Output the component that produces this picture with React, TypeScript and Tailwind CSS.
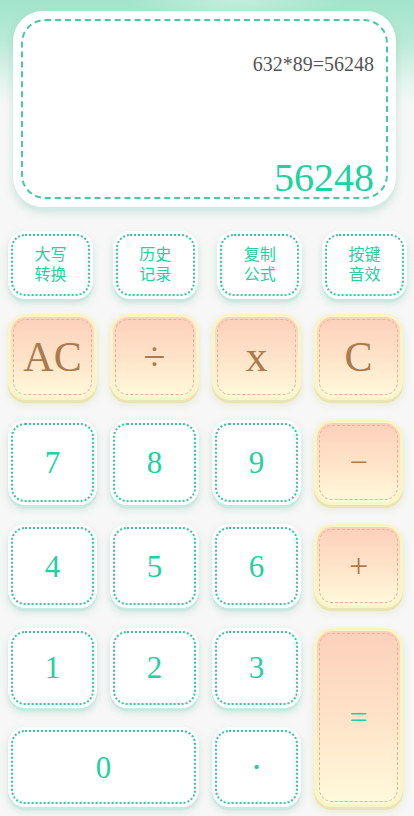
import type { ReactNode } from 'react';

const serif = 'font-["Liberation_Serif","Times_New_Roman",serif]';

const WhiteKey = ({ children, className = '' }: { children: ReactNode; className?: string }) => (
    <div className={`flex rounded-[17px] bg-white p-[3px] shadow-[0_3px_0_#c9e8df,0_4px_7px_rgba(120,190,170,0.35)] ${className}`}>
        <div className="flex flex-1 items-center justify-center rounded-[14px] border-[2.5px] border-dotted border-[#38c6a0]">
            {children}
        </div>
    </div>
);

const PeachKey = ({ children, className = '' }: { children: ReactNode; className?: string }) => (
    <div className={`flex rounded-[18px] bg-[#f9f5c6] p-[3px] shadow-[0_3px_0_#e9e4b2,0_4px_7px_rgba(200,190,120,0.3)] ${className}`}>
        <div className="flex flex-1 rounded-[15px] bg-[linear-gradient(180deg,#fdd0bb_0%,#fee3c8_50%,#fffadb_100%)] p-[2px]">
            <div className="flex flex-1 items-center justify-center rounded-[13px] border-[1.5px] border-dashed border-[#f3b098]">
                {children}
            </div>
        </div>
    </div>
);

const Digit = ({ value }: { value: string }) => (
    <span className={`${serif} text-[31px] leading-none text-[#22d19f]`}>{value}</span>
);

const Op = ({ value, size = 'text-[42px]' }: { value: string; size?: string }) => (
    <span className={`${serif} ${size} leading-none text-[#ab7b4c]`}>{value}</span>
);

const tools = [
    ['大写', '转换'],
    ['历史', '记录'],
    ['复制', '公式'],
    ['按键', '音效'],
];

export default function App() {
    return (
        <div className="min-h-[816px] w-full overflow-hidden bg-[#f6f7f6] bg-[radial-gradient(ellipse_110px_22px_at_235px_0px,rgba(255,255,255,0.35),transparent),linear-gradient(180deg,#a2e4cb_0px,#b8ead7_40px,#e2f4ed_80px,#f6f7f6_105px,#f6f7f6_100%)]">
            {/* display */}
            <div className="ml-[13px] mr-[18px] mt-[11px] flex h-[196px] rounded-[30px] bg-white p-[8px] shadow-[0_3px_0_#d2ebe4,0_5px_9px_rgba(120,190,170,0.35)]">
                <div className="flex flex-1 flex-col items-end justify-between rounded-[24px] border-2 border-dashed border-[#45caa7] pr-[12px] pt-[31px]">
                    <span className={`${serif} text-[20px] leading-[24px] text-[#555]`}>632*89=56248</span>
                    <span className={`${serif} text-[40px] leading-[38px] text-[#22d19f]`}>56248</span>
                </div>
            </div>

            {/* tool row */}
            <div className="ml-[8px] mr-[7px] mt-[24px] flex justify-between">
                {tools.map(([a, b]) => (
                    <WhiteKey key={a} className="h-[68px] w-[85px]">
                        <div className='flex flex-col items-center font-["Liberation_Sans","Noto_Sans_CJK_SC",sans-serif] text-[16px] leading-[20px] text-[#2bcf9f]'>
                            <span>{a}</span>
                            <span>{b}</span>
                        </div>
                    </WhiteKey>
                ))}
            </div>

            {/* keypad */}
            <div className="ml-[8px] mt-[15px] grid grid-cols-[89px_89px_89px_89px] grid-rows-[86px_85px_84px_80px_80px] gap-x-[13px] gap-y-[19.5px]">
                <PeachKey><Op value="AC" /></PeachKey>
                <PeachKey><Op value="÷" size="text-[40px]" /></PeachKey>
                <PeachKey><Op value="x" size="text-[44px]" /></PeachKey>
                <PeachKey><Op value="C" /></PeachKey>

                <WhiteKey><Digit value="7" /></WhiteKey>
                <WhiteKey><Digit value="8" /></WhiteKey>
                <WhiteKey><Digit value="9" /></WhiteKey>
                <PeachKey><Op value="−" size="text-[32px]" /></PeachKey>

                <WhiteKey><Digit value="4" /></WhiteKey>
                <WhiteKey><Digit value="5" /></WhiteKey>
                <WhiteKey><Digit value="6" /></WhiteKey>
                <PeachKey><Op value="+" size="text-[34px]" /></PeachKey>

                <WhiteKey><Digit value="1" /></WhiteKey>
                <WhiteKey><Digit value="2" /></WhiteKey>
                <WhiteKey><Digit value="3" /></WhiteKey>
                <PeachKey className="row-span-2">
                    <span className={`${serif} text-[32px] leading-none text-[#22d19f]`}>=</span>
                </PeachKey>

                <WhiteKey className="col-span-2"><Digit value="0" /></WhiteKey>
                <WhiteKey>
                    <span className={`${serif} text-[36px] leading-none text-[#22d19f]`}>·</span>
                </WhiteKey>
            </div>
        </div>
    );
}
